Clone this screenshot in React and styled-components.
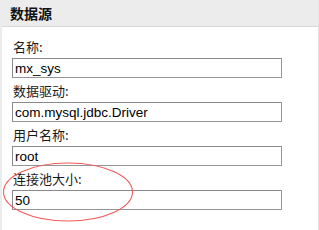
import React from "react";
import styled, { createGlobalStyle } from "styled-components";

const Global = createGlobalStyle`
  html, body { margin: 0; padding: 0; background: #fff; }
  body { font-family: "Liberation Sans", "Noto Sans CJK SC", sans-serif; }
`;

const Panel = styled.div`
  position: relative;
  width: 319px;
  height: 230px;
  box-sizing: border-box;
  border-left: 2px solid #ececec;
  border-right: 1px solid #e4e4e4;
  background: #fff;
  overflow: hidden;
`;

const Header = styled.div`
  height: 26px;
  margin-left: -2px;
  padding-left: 10px;
  background: #ececec;
  border-bottom: 1px solid #d9d9d9;
  display: flex;
  align-items: center;
  font-family: "Noto Sans CJK SC", sans-serif;
  font-weight: 700;
  font-size: 14px;
  color: #111;
  line-height: 1;
`;

const Form = styled.div`
  display: flex;
  flex-direction: column;
  padding: 7px 0 0 10px;
`;

const Field = styled.div`
  display: flex;
  flex-direction: column;
`;

const Label = styled.div`
  height: 24px;
  display: flex;
  align-items: center;
  font-family: "Noto Sans CJK SC", sans-serif;
  font-size: 13px;
  line-height: 1;
  color: #1a1a1a;
  padding-left: 1px;
`;

const Input = styled.input`
  box-sizing: border-box;
  width: 270px;
  height: 20px;
  margin: 0;
  padding: 0 2px;
  border: 1px solid #959595;
  border-top-color: #8a8a8a;
  border-left-color: #8a8a8a;
  outline: none;
  font-family: "Liberation Sans", sans-serif;
  font-size: 13.5px;
  color: #000;
  background: #fff;
`;

const Annotation = styled.svg`
  position: absolute;
  left: 0;
  top: 160px;
  pointer-events: none;
`;

const fields = [
  { label: "名称:", value: "mx_sys" },
  { label: "数据驱动:", value: "com.mysql.jdbc.Driver" },
  { label: "用户名称:", value: "root" },
  { label: "连接池大小:", value: "50" },
];

export default function App() {
  return (
    <>
      <Global />
      <Panel>
        <Header>数据源</Header>
        <Form>
          {fields.map((f) => (
            <Field key={f.label}>
              <Label>{f.label}</Label>
              <Input readOnly defaultValue={f.value} />
            </Field>
          ))}
        </Form>
        <Annotation width="140" height="66" viewBox="0 0 140 66">
          <ellipse cx="66" cy="32" rx="64.5" ry="29" fill="none" stroke="#f25a5a" strokeWidth="1.1" />
        </Annotation>
      </Panel>
    </>
  );
}
